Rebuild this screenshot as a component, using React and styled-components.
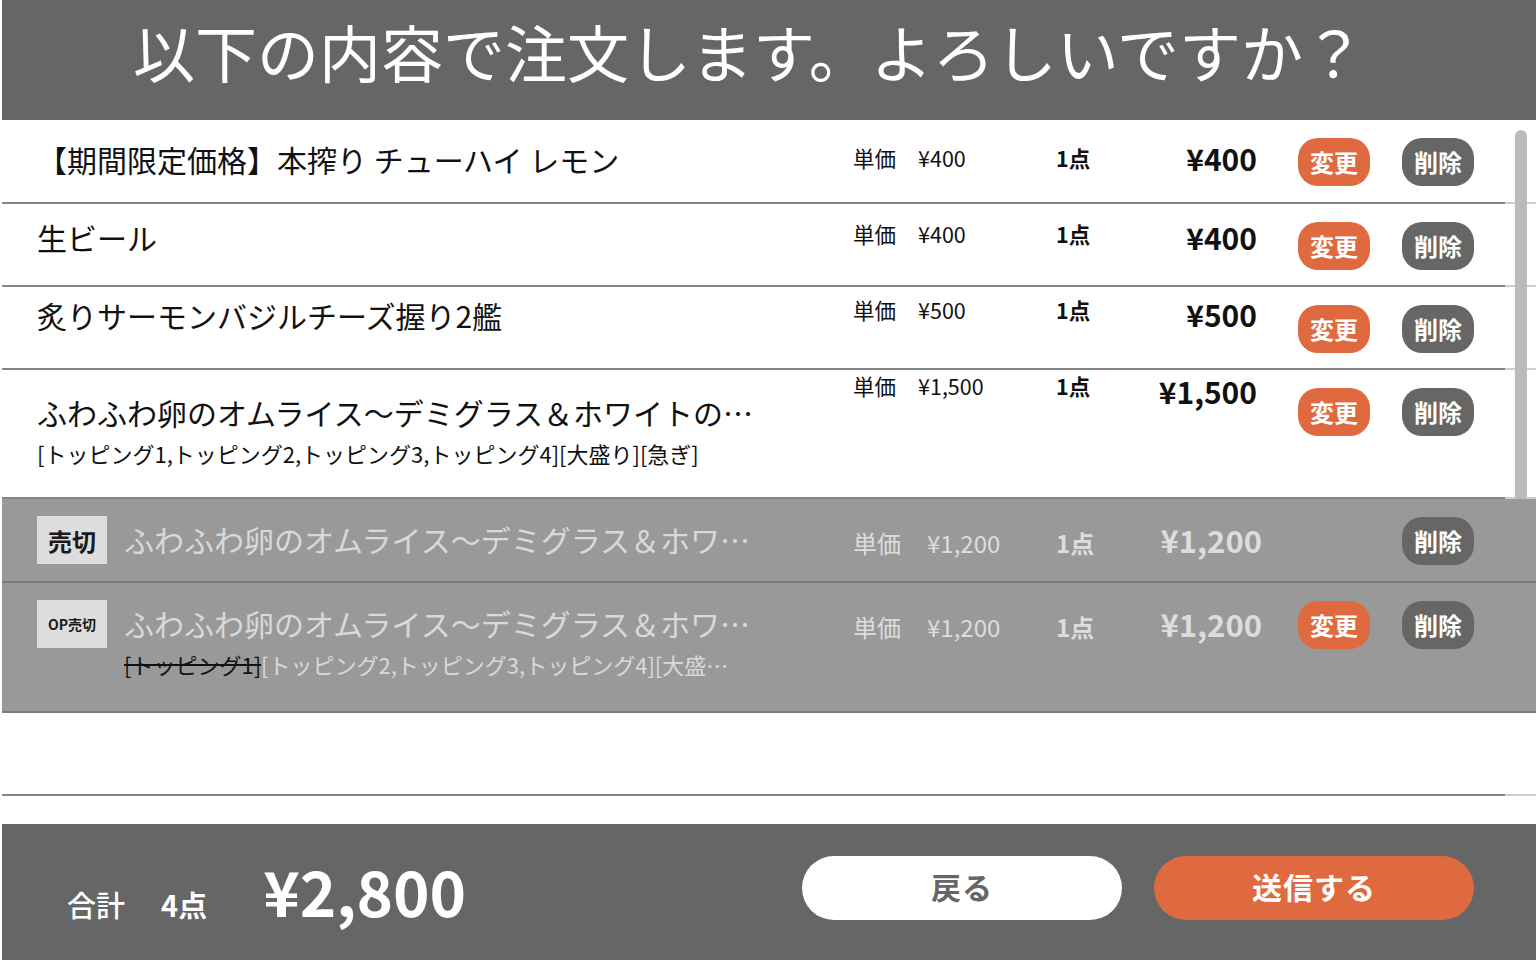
import styled, { createGlobalStyle } from "styled-components";

const GlobalStyle = createGlobalStyle`
  html, body {
    margin: 0;
    padding: 0;
    background: #ffffff;
  }
  body {
    font-family: "Noto Sans CJK JP", "Noto Sans", sans-serif;
    color: #111111;
  }
  * {
    box-sizing: border-box;
  }
`;

const Page = styled.div`
  width: 1536px;
  height: 960px;
  padding-left: 2px;
  display: flex;
  flex-direction: column;
  overflow: hidden;
  background: #ffffff;
`;

const Header = styled.header`
  flex: 0 0 120px;
  background: #666666;
  display: flex;
  align-items: center;
  justify-content: center;
  padding-right: 40px;
`;

const Title = styled.h1`
  margin: 0;
  color: #ffffff;
  font-size: 62px;
  font-weight: 400;
  line-height: 1;
  padding-bottom: 18px;
`;

const List = styled.div`
  position: relative;
  flex: 0 0 676px;
  display: flex;
  flex-direction: column;
`;

const Track = styled.div`
  position: absolute;
  top: 0;
  right: 0;
  bottom: 0;
  width: 31px;
  background: rgba(255, 255, 255, 0.6);
  z-index: 1;
`;

const Thumb = styled.div`
  margin: 10px 0 0 10px;
  width: 12px;
  height: 372px;
  border-radius: 6px;
  background: #bbbbbb;
`;

const Row = styled.div`
  position: relative;
  z-index: ${(p) => (p.$soldOut ? 2 : 0)};
  display: flex;
  align-items: flex-start;
  height: ${(p) => p.$height}px;
  padding-left: 35px;
  background: ${(p) => (p.$soldOut ? "#999999" : "#ffffff")};
  border-bottom: 2px solid ${(p) => (p.$soldOut ? "#7c7c7c" : "#858585")};
  color: ${(p) => (p.$soldOut ? "#dddddd" : "#111111")};
`;

const NameCol = styled.div`
  flex: 0 0 ${(p) => (p.$soldOut ? 716 : 718)}px;
  margin-right: ${(p) => (p.$soldOut ? 100 : 98)}px;
  display: flex;
  align-items: flex-start;
  gap: 17px;
  min-width: 0;
  padding-top: ${(p) => p.$top}px;
`;

const Badge = styled.div`
  flex: 0 0 70px;
  height: 48px;
  background: #dddddd;
  color: #1a1a1a;
  font-weight: 700;
  font-size: ${(p) => (p.$small ? 14 : 24)}px;
  display: flex;
  align-items: center;
  justify-content: center;
`;

const NameBlock = styled.div`
  flex: 1;
  min-width: 0;
  padding-top: ${(p) => (p.$soldOut ? 3 : 0)}px;
`;

const Name = styled.div`
  font-size: 30px;
  line-height: 40px;
  white-space: nowrap;
  overflow: hidden;
  text-overflow: ellipsis;
  color: ${(p) => (p.$soldOut ? "#d9d9d9" : "#111111")};
`;

const Options = styled.div`
  margin-top: 6px;
  padding-right: ${(p) => (p.$soldOut ? 8 : 0)}px;
  font-size: 22px;
  line-height: 30px;
  white-space: nowrap;
  overflow: hidden;
  text-overflow: ellipsis;
  color: ${(p) => (p.$soldOut ? "#d9d9d9" : "#111111")};
`;

const Struck = styled.span`
  color: #111111;
  text-decoration: line-through;
`;

const UnitCol = styled.div`
  flex: 0 0 203px;
  display: flex;
  gap: ${(p) => (p.$soldOut ? 26 : 22)}px;
  font-size: ${(p) => (p.$soldOut ? 24 : 21.5)}px;
  line-height: 30px;
  padding-top: ${(p) => p.$top}px;
`;

const QtyCol = styled.div`
  flex: 0 0 60px;
  font-size: ${(p) => (p.$soldOut ? 24 : 21.5)}px;
  font-weight: 700;
  line-height: 30px;
  padding-top: ${(p) => p.$top}px;
`;

const TotalCol = styled.div`
  flex: 0 0 ${(p) => (p.$soldOut ? 146 : 141)}px;
  text-align: right;
  font-size: ${(p) => (p.$soldOut ? 31 : 30)}px;
  font-weight: 700;
  line-height: 40px;
  padding-top: ${(p) => p.$top}px;
`;

const Actions = styled.div`
  display: flex;
  gap: 32px;
  margin-left: ${(p) => (p.$soldOut ? 36 : 41)}px;
  padding-top: 18px;
`;

const SmallBtn = styled.button`
  width: 72px;
  height: 48px;
  border: none;
  border-radius: 20px;
  padding: 0;
  background: ${(p) => (p.$kind === "edit" ? "#e06a40" : "#666666")};
  visibility: ${(p) => (p.$hidden ? "hidden" : "visible")};
  color: #ffffff;
  font-family: inherit;
  font-size: 24px;
  font-weight: 700;
  line-height: 48px;
`;

const Footer = styled.footer`
  margin-top: 28px;
  flex: 1;
  background: #666666;
  display: flex;
  align-items: center;
  padding: 0 62px 8px 65px;
  color: #ffffff;
`;

const Summary = styled.div`
  display: flex;
  align-items: baseline;
  flex: 1;
  padding-top: 8px;
`;

const SumLabel = styled.span`
  font-size: 29px;
  font-weight: 500;
  margin-right: 36px;
`;

const SumCount = styled.span`
  font-size: 29px;
  font-weight: 700;
  margin-right: 56px;
`;

const SumPrice = styled.span`
  font-size: 62px;
  font-weight: 700;
  line-height: 1;
`;

const Buttons = styled.div`
  display: flex;
  gap: 32px;
`;

const BigBtn = styled.button`
  width: 320px;
  height: 64px;
  border: none;
  border-radius: 32px;
  background: ${(p) => (p.$primary ? "#e06a40" : "#ffffff")};
  color: ${(p) => (p.$primary ? "#ffffff" : "#666666")};
  font-family: inherit;
  font-size: 30px;
  font-weight: 700;
  letter-spacing: 1px;
  padding: 0 0 4px;
`;

// top offsets per row follow the reference, which drifts a little row by row
const items = [
  {
    name: "【期間限定価格】本搾り チューハイ レモン",
    unit: "¥400",
    total: "¥400",
    height: 84,
    tops: { name: 19, info: 23, total: 18 },
  },
  {
    name: "生ビール",
    unit: "¥400",
    total: "¥400",
    height: 83,
    tops: { name: 13, info: 15, total: 13 },
  },
  {
    name: "炙りサーモンバジルチーズ握り2艦",
    unit: "¥500",
    total: "¥500",
    height: 83,
    tops: { name: 8, info: 8, total: 7 },
  },
  {
    name: "ふわふわ卵のオムライス〜デミグラス＆ホワイトの2種ソース",
    options: "[トッピング1,トッピング2,トッピング3,トッピング4][大盛り][急ぎ]",
    unit: "¥1,500",
    total: "¥1,500",
    height: 129,
    tops: { name: 22, info: 1, total: 1 },
  },
  {
    name: "ふわふわ卵のオムライス〜デミグラス＆ホワイトの2種ソース",
    unit: "¥1,200",
    total: "¥1,200",
    height: 84,
    badge: "売切",
    noEdit: true,
    tops: { name: 17, info: 29, total: 21 },
  },
  {
    name: "ふわふわ卵のオムライス〜デミグラス＆ホワイトの2種ソース",
    struck: "[トッピング1]",
    options: "[トッピング2,トッピング3,トッピング4][大盛り][急ぎ]",
    unit: "¥1,200",
    total: "¥1,200",
    height: 130,
    badge: "OP売切",
    tops: { name: 17, info: 29, total: 21 },
  },
];

function OrderRow({ item }) {
  const soldOut = Boolean(item.badge);
  const { tops } = item;
  return (
    <Row $height={item.height} $soldOut={soldOut}>
      <NameCol $soldOut={soldOut} $top={tops.name}>
        {item.badge && <Badge $small={item.badge.length > 2}>{item.badge}</Badge>}
        <NameBlock $soldOut={soldOut}>
          <Name $soldOut={soldOut}>{item.name}</Name>
          {(item.options || item.struck) && (
            <Options $soldOut={soldOut}>
              {item.struck && <Struck>{item.struck}</Struck>}
              {item.options}
            </Options>
          )}
        </NameBlock>
      </NameCol>
      <UnitCol $soldOut={soldOut} $top={tops.info}>
        <span>単価</span>
        <span>{item.unit}</span>
      </UnitCol>
      <QtyCol $soldOut={soldOut} $top={tops.info}>1点</QtyCol>
      <TotalCol $soldOut={soldOut} $top={tops.total}>
        {item.total}
      </TotalCol>
      <Actions $soldOut={soldOut}>
        <SmallBtn $kind="edit" $hidden={item.noEdit}>
          変更
        </SmallBtn>
        <SmallBtn $kind="delete">削除</SmallBtn>
      </Actions>
    </Row>
  );
}

function App() {
  return (
    <>
      <GlobalStyle />
      <Page>
        <Header>
          <Title>以下の内容で注文します。よろしいですか？</Title>
        </Header>
        <List>
          {items.map((item, i) => (
            <OrderRow key={i} item={item} />
          ))}
          <Row $height={83} />
          <Track>
            <Thumb />
          </Track>
        </List>
        <Footer>
          <Summary>
            <SumLabel>合計</SumLabel>
            <SumCount>4点</SumCount>
            <SumPrice>¥2,800</SumPrice>
          </Summary>
          <Buttons>
            <BigBtn>戻る</BigBtn>
            <BigBtn $primary>送信する</BigBtn>
          </Buttons>
        </Footer>
      </Page>
    </>
  );
}

export default App;
